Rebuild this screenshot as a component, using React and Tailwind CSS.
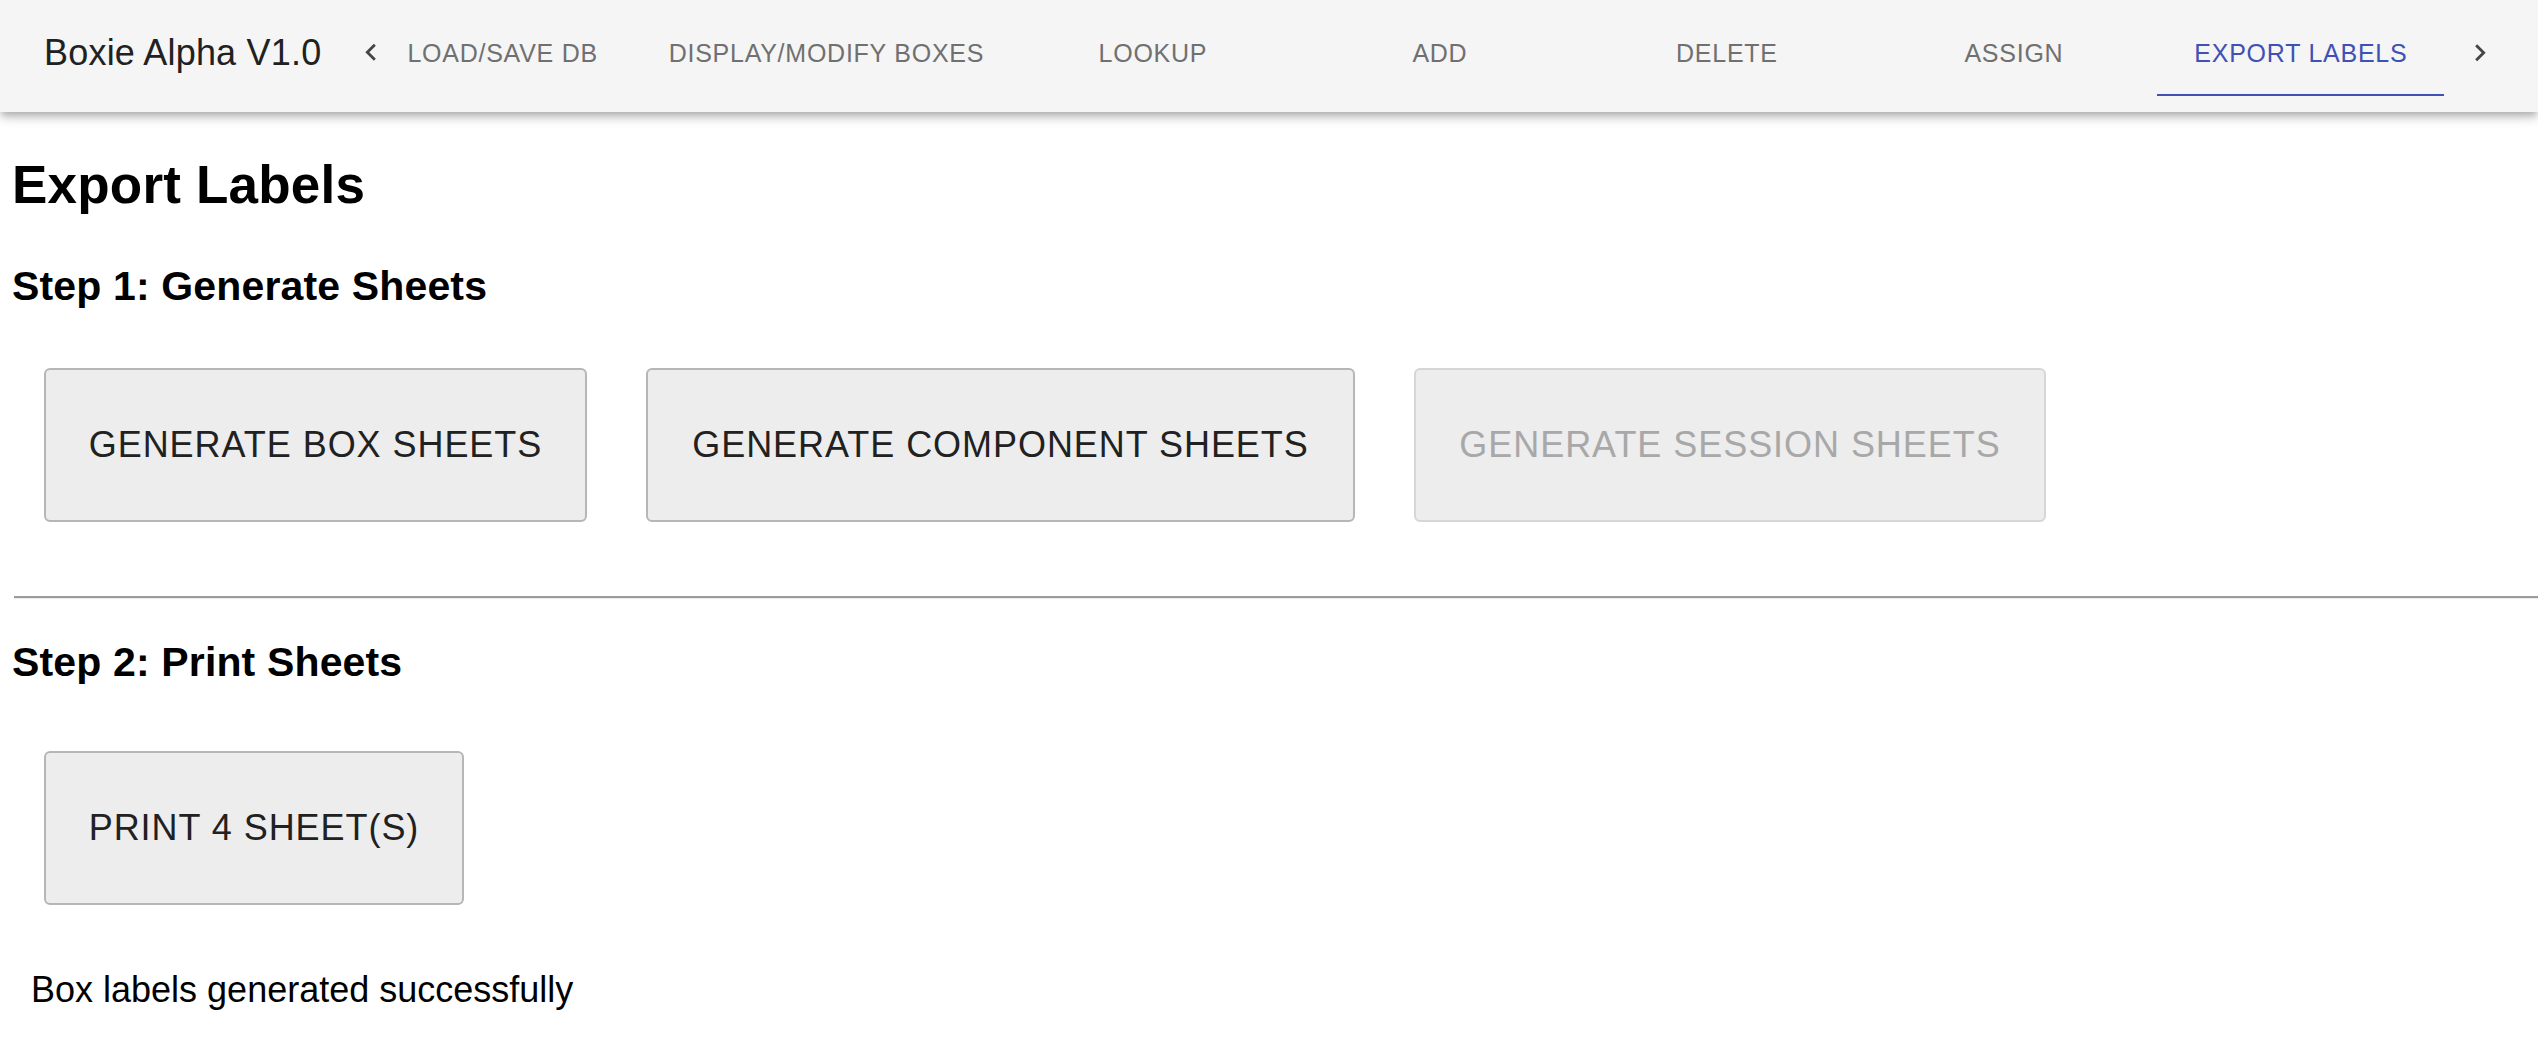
import React from "react";

const tabs = [
  { label: "LOAD/SAVE DB", w: "w-[236px] justify-start" },
  { label: "DISPLAY/MODIFY BOXES", w: "w-[366px] justify-center" },
  { label: "LOOKUP", w: "w-[287px] justify-center" },
  { label: "ADD", w: "w-[287px] justify-center" },
  { label: "DELETE", w: "w-[287px] justify-center" },
  { label: "ASSIGN", w: "w-[287px] justify-center" },
  { label: "EXPORT LABELS", w: "w-[287px] justify-center", active: true },
];

function ChevronLeft() {
  return (
    <svg width="34" height="34" viewBox="0 0 24 24" fill="#454545">
      <path d="M15.41 16.09l-4.58-4.59 4.58-4.59L14 5.5l-6 6 6 6z" />
    </svg>
  );
}

function ChevronRight() {
  return (
    <svg width="34" height="34" viewBox="0 0 24 24" fill="#454545">
      <path d="M8.59 16.34l4.58-4.59-4.58-4.59L10 5.75l6 6-6 6z" />
    </svg>
  );
}

function Btn({ children, w, disabled }) {
  return (
    <button
      className={
        "h-[154px] rounded-[6px] border-2 bg-[#ededed] text-[36px] leading-[62px] tracking-[0.95px] flex items-center justify-center " +
        w +
        (disabled
          ? " border-[#d6d6d6] text-[#a8a8a8]"
          : " border-[#b6b6b6] text-[#212121]")
      }
    >
      {children}
    </button>
  );
}

export default function App() {
  return (
    <div className="min-h-[1042px] bg-white font-['Liberation_Sans',Arial,sans-serif] text-black">
      <header className="relative z-10 flex h-[112px] items-center bg-[#f5f5f5] pb-[6px] pl-[44px] shadow-[0px_4px_7px_-2px_rgba(0,0,0,0.22),0px_7px_9px_0px_rgba(0,0,0,0.12),0px_2px_16px_0px_rgba(0,0,0,0.08)]">
        <div className="whitespace-nowrap text-[36px] leading-[42px] tracking-[0.2px] text-[#212121]">
          Boxie Alpha V1.0
        </div>
        <div className="ml-[14px] flex h-[86px] w-[72px] shrink-0 items-center justify-center">
          <ChevronLeft />
        </div>
        <nav className="flex h-[86px] shrink-0">
          {tabs.map((t) => (
            <div
              key={t.label}
              className={
                "relative flex h-[86px] shrink-0 items-center whitespace-nowrap text-[25px] leading-[30px] tracking-[0.75px] " +
                t.w +
                (t.active ? " text-[#3f51b5]" : " text-[#707070]")
              }
            >
              {t.label}
              {t.active && (
                <span className="absolute bottom-0 left-0 right-0 h-[2px] bg-[#3f51b5]" />
              )}
            </div>
          ))}
        </nav>
        <div className="flex h-[86px] w-[72px] shrink-0 items-center justify-center">
          <ChevronRight />
        </div>
      </header>

      <main className="pl-[14px] pt-[43px]">
        <h1 className="-ml-[2px] text-[53px] font-bold leading-[60px] tracking-[0.2px]">
          Export Labels
        </h1>
        <h2 className="-ml-[2px] mt-[48px] text-[41px] font-bold leading-[46px] tracking-[0.15px]">
          Step 1: Generate Sheets
        </h2>
        <div className="mt-[59px] flex gap-[59px] pl-[30px]">
          <Btn w="w-[543px]">GENERATE BOX SHEETS</Btn>
          <Btn w="w-[709px]">GENERATE COMPONENT SHEETS</Btn>
          <Btn w="w-[632px]" disabled>
            GENERATE SESSION SHEETS
          </Btn>
        </div>
        <div className="mt-[74px] h-[3px] border-t-2 border-b border-t-[#9c9c9c] border-b-[#ececec]" />
        <h2 className="-ml-[2px] mt-[40px] text-[41px] font-bold leading-[46px] tracking-[0.15px]">
          Step 2: Print Sheets
        </h2>
        <div className="mt-[66px] flex pl-[30px]">
          <Btn w="w-[420px]">PRINT 4 SHEET(S)</Btn>
        </div>
        <p className="mt-[64px] pl-[17px] text-[36px] leading-[42px] text-black">
          Box labels generated successfully
        </p>
      </main>
    </div>
  );
}
